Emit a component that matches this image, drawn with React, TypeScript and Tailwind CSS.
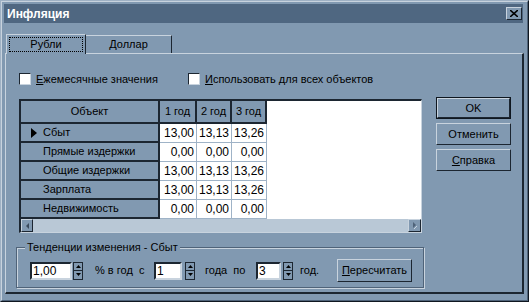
import React from 'react';

const raised =
  'border border-t-[#c8d3de] border-l-[#c8d3de] border-r-[#1c2631] border-b-[#1c2631]';

const rows = [
  ['Сбыт', '13,00', '13,13', '13,26'],
  ['Прямые издержки', '0,00', '0,00', '0,00'],
  ['Общие издержки', '13,00', '13,13', '13,26'],
  ['Зарплата', '13,00', '13,13', '13,26'],
  ['Недвижимость', '0,00', '0,00', '0,00'],
];

function Checkbox({ label }: { label: React.ReactNode }) {
  return (
    <div className="flex items-center">
      <div className="w-[12px] h-[12px] bg-white border border-t-[#1c2631] border-l-[#1c2631] border-r-[#c8d3de] border-b-[#c8d3de]" />
      <span className="ml-[5px] leading-none">{label}</span>
    </div>
  );
}

function Spin() {
  return (
    <div className="w-[10px] h-[18px] border border-[#1c2631] flex flex-col">
      <div className="flex-1 bg-[#8199b1] border-b border-[#1c2631] flex items-center justify-center">
        <svg width="5" height="3" viewBox="0 0 5 3"><path d="M2.5 0L5 3H0z" fill="#000" /></svg>
      </div>
      <div className="flex-1 bg-[#8199b1] flex items-center justify-center">
        <svg width="5" height="3" viewBox="0 0 5 3"><path d="M0 0h5L2.5 3z" fill="#000" /></svg>
      </div>
    </div>
  );
}

function Field({ value, w }: { value: string; w: string }) {
  return (
    <div className={`${w} h-[18px] bg-white border-2 border-t-[#1c2631] border-l-[#1c2631] border-r-[#c8d3de] border-b-[#c8d3de] flex items-center pl-[1px] text-[12px]`}>
      {value}
    </div>
  );
}

function Button({ children, def }: { children: React.ReactNode; def?: boolean }) {
  return (
    <div className={`w-[75px] h-[22px] ${def ? 'border border-[#0f1720]' : ''}`}>
      <div className={`w-full h-full ${raised} flex items-center justify-center`}>{children}</div>
    </div>
  );
}

export default function App() {
  return (
    <div className="w-[529px] h-[302px] bg-[#8199b1] border border-t-[#9fb1c4] border-l-[#9fb1c4] border-r-[#0f1720] border-b-[#0f1720] font-['Liberation_Sans',sans-serif] text-[11px] text-black">
      <div className="w-full h-full border border-t-[#c8d3de] border-l-[#c8d3de] border-r-[#4f6379] border-b-[#4f6379] p-[2px] flex flex-col">
        {/* Title bar */}
        <div className="h-[19px] w-[519px] bg-[#4f6781] flex items-center justify-between pl-[3px] pr-[1px]">
          <span className="text-white font-bold text-[12px]">Инфляция</span>
          <div className={`w-[16px] h-[13px] bg-[#8199b1] ${raised} flex items-center justify-center`}>
            <svg width="8" height="7" viewBox="0 0 8 7">
              <path d="M0 0L8 7M8 0L0 7" stroke="#000" strokeWidth="1.6" />
            </svg>
          </div>
        </div>

        {/* Tabs */}
        <div className="mt-[10px] ml-[2px] flex items-end h-[20px]">
          <div className="relative z-10 -mb-px w-[80px] h-[20px] bg-[#8199b1] border-t border-l border-r border-t-[#c8d3de] border-l-[#c8d3de] border-r-[#1c2631] border-b-0 p-[2px]">
            <div className="w-full h-[15px] border border-dotted border-black flex items-center justify-center">Рубли</div>
          </div>
          <div className="w-[86px] h-[18px] border-t border-r border-t-[#c8d3de] border-r-[#1c2631] border-b-0 border-l-0 flex items-center justify-center">
            Доллар
          </div>
        </div>

        {/* Panel */}
        <div className="ml-[1px] w-[519px] h-[241px] border-t border-l border-t-[#c8d3de] border-l-[#c8d3de] border-r-2 border-b-2 border-r-[#1c2631] border-b-[#1c2631] flex flex-col">
          <div className="mt-[19px] pl-[13px] flex h-[12px]">
            <div className="w-[169px]">
              <Checkbox label={<><u>Е</u>жемесячные значения</>} />
            </div>
            <Checkbox label={<><u>И</u>спользовать для всех объектов</>} />
          </div>

          <div className="mt-[12px] pl-[13px] flex">
            {/* Grid */}
            <div className="mt-[2px] w-[403px] h-[134px] bg-white border-t-2 border-l-2 border-r border-b border-t-[#1c2631] border-l-[#1c2631] border-r-[#c8d3de] border-b-[#c8d3de] flex flex-col">
              <div className="flex h-[23px]">
                <div className="w-[139px] bg-[#8199b1] border-r-2 border-b-2 border-[#1c2631] flex items-center justify-center">Объект</div>
                <div className="w-[37px] bg-[#8199b1] border-r-2 border-b-2 border-[#1c2631] flex items-center justify-center">1 год</div>
                <div className="w-[35px] bg-[#8199b1] border-r-2 border-b-2 border-[#1c2631] flex items-center justify-center">2 год</div>
                <div className="w-[35px] bg-[#8199b1] border-r-2 border-b-2 border-[#1c2631] flex items-center justify-center">3 год</div>
              </div>
              {rows.map((r, i) => (
                <div key={r[0]} className="flex h-[19px]">
                  <div className="w-[139px] bg-[#8199b1] border-r-2 border-b-2 border-[#1c2631] flex items-center">
                    <div className="w-[22px] flex items-center justify-center pl-[4px]">
                      {i === 0 && (
                        <svg width="6" height="10" viewBox="0 0 6 10"><path d="M0 0L6 5L0 10z" fill="#000" /></svg>
                      )}
                    </div>
                    {r[0]}
                  </div>
                  {r.slice(1).map((v, j) => (
                    <div
                      key={j}
                      className={`${j === 0 ? 'w-[37px]' : 'w-[35px]'} border-r border-b border-[#9fb3c7] flex items-center justify-end pr-[2px] text-[12px]`}
                    >
                      {v}
                    </div>
                  ))}
                </div>
              ))}
              <div className="h-[13px] bg-[#b9c8d6] flex justify-between">
                <div className={`w-[12px] h-full bg-[#8199b1] ${raised} flex items-center justify-center`}>
                  <svg width="3" height="6" viewBox="0 0 3 6"><path d="M3 0V6L0 3z" fill="#3a4a5c" /></svg>
                </div>
                <div className={`w-[13px] h-full bg-[#8199b1] ${raised} flex items-center justify-center`}>
                  <svg width="4" height="7" viewBox="0 0 4 7"><path d="M0 0V6L3 3z" fill="#4f6379" /><path d="M1 7L4 4" stroke="#c8d3de" /></svg>
                </div>
              </div>
            </div>

            {/* Buttons */}
            <div className="ml-[14px] flex flex-col gap-[4px]">
              <Button def>OK</Button>
              <Button>Отменить</Button>
              <Button><span><u>С</u>правка</span></Button>
            </div>
          </div>

          {/* Group box */}
          <div className="relative mt-[14px] ml-[10px] w-[408px] h-[41px] border border-[#4f6379] shadow-[inset_1px_1px_0_#c8d3de,1px_1px_0_#c8d3de] flex items-center pl-[13px] pt-[6px]">
            <span className="absolute -top-[8px] left-[8px] px-[2px] bg-[#8199b1] leading-[14px]">
              Тенденции изменения - Сбыт
            </span>
            <Field value="1,00" w="w-[42px]" />
            <div className="ml-[1px]"><Spin /></div>
            <span className="ml-[12px] w-[59px]">% в год&nbsp; с</span>
            <Field value="1" w="w-[28px]" />
            <div className="ml-[3px]"><Spin /></div>
            <span className="ml-[10px] w-[51px]">года&nbsp; по</span>
            <Field value="3" w="w-[25px]" />
            <div className="ml-[2px]"><Spin /></div>
            <span className="ml-[7px] w-[37px]">год.</span>
            <div className={`w-[75px] h-[23px] ${raised} flex items-center justify-center`}>
              <span><u>П</u>ересчитать</span>
            </div>
          </div>
        </div>
      </div>
    </div>
  );
}
